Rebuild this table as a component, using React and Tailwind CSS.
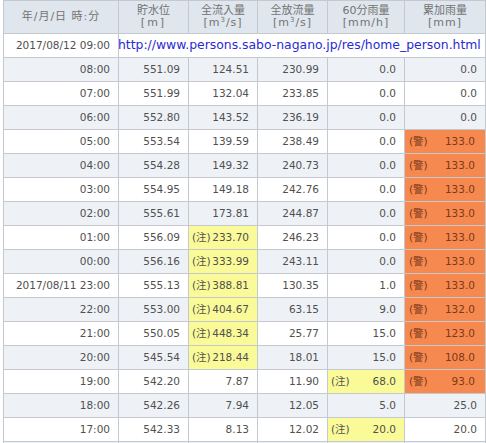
import React from "react";

const rows = [
  ["08:00", "551.09", "124.51", "230.99", "0.0", "0.0"],
  ["07:00", "551.99", "132.04", "233.85", "0.0", "0.0"],
  ["06:00", "552.80", "143.52", "236.19", "0.0", "0.0"],
  ["05:00", "553.54", "139.59", "238.49", "0.0", "!133.0"],
  ["04:00", "554.28", "149.32", "240.73", "0.0", "!133.0"],
  ["03:00", "554.95", "149.18", "242.76", "0.0", "!133.0"],
  ["02:00", "555.61", "173.81", "244.87", "0.0", "!133.0"],
  ["01:00", "556.09", "*233.70", "246.23", "0.0", "!133.0"],
  ["00:00", "556.16", "*333.99", "243.11", "0.0", "!133.0"],
  ["2017/08/11 23:00", "555.13", "*388.81", "130.35", "1.0", "!133.0"],
  ["22:00", "553.00", "*404.67", "63.15", "9.0", "!132.0"],
  ["21:00", "550.05", "*448.34", "25.77", "15.0", "!123.0"],
  ["20:00", "545.54", "*218.44", "18.01", "15.0", "!108.0"],
  ["19:00", "542.20", "7.87", "11.90", "*68.0", "!93.0"],
  ["18:00", "542.26", "7.94", "12.05", "5.0", "25.0"],
  ["17:00", "542.33", "8.13", "12.02", "*20.0", "20.0"],
];

const font = { fontFamily: '"DejaVu Sans", "Noto Sans CJK JP", sans-serif' };

function Cell({ v, bg }) {
  if (v.startsWith("*")) {
    return (
      <td className="border border-[#c4c8cf] bg-[#fafa98] px-[3px] pr-[8px]">
        <div className="flex justify-between items-center">
          <span className="text-[10.5px]">(注)</span>
          <span>{v.slice(1)}</span>
        </div>
      </td>
    );
  }
  if (v.startsWith("!")) {
    return (
      <td className="border border-[#c4c8cf] bg-[#f6894f] text-[#7a3a18] px-[4px] pr-[10px]">
        <div className="flex justify-between items-center">
          <span className="text-[10.5px]">(警)</span>
          <span>{v.slice(1)}</span>
        </div>
      </td>
    );
  }
  return <td className={`border border-[#c4c8cf] text-right pr-[8px] ${bg}`}>{v}</td>;
}

function Sup() {
  return <span className="relative top-[-4px] text-[7px] leading-none">3</span>;
}

export default function App() {
  return (
    <div className="bg-white w-[486px] h-[443px] overflow-hidden pl-[3px]" style={font}>
      <table className="table-fixed border-collapse w-[482px] text-[10.5px] text-[#505050]">
        <colgroup>
          <col className="w-[115px]" />
          <col className="w-[70px]" />
          <col className="w-[69px]" />
          <col className="w-[70px]" />
          <col className="w-[77px]" />
          <col className="w-[81px]" />
        </colgroup>
        <thead>
          <tr className="h-[33px] bg-[#dfe6ee] text-[#737373] text-[11px] leading-[12px]">
            <th className="border border-[#c4c8cf] font-normal tracking-[1px]">年/月/日 時:分</th>
            <th className="border border-[#c4c8cf] font-normal">
              <div>貯水位</div>
              <div className="tracking-[2px]">[m]</div>
            </th>
            <th className="border border-[#c4c8cf] font-normal">
              <div>全流入量</div>
              <div className="tracking-[1px]">[m<Sup />/s]</div>
            </th>
            <th className="border border-[#c4c8cf] font-normal">
              <div>全放流量</div>
              <div className="tracking-[1px]">[m<Sup />/s]</div>
            </th>
            <th className="border border-[#c4c8cf] font-normal">
              <div>60分雨量</div>
              <div className="tracking-[1px]">[mm/h]</div>
            </th>
            <th className="border border-[#c4c8cf] font-normal">
              <div>累加雨量</div>
              <div className="tracking-[1px]">[mm]</div>
            </th>
          </tr>
        </thead>
        <tbody>
          <tr className="h-[24px] bg-white">
            <td className="border border-[#c4c8cf] text-right pr-[8px]">2017/08/12 09:00</td>
            <td colSpan={5} className="border border-[#c4c8cf] p-0 overflow-visible whitespace-nowrap">
              <span className="text-[12.4px] text-[#2a2ad4] ml-[-1px]">http://www.persons.sabo-nagano.jp/res/home_person.html</span>
            </td>
          </tr>
          {rows.map((r, i) => {
            const bg = i % 2 === 0 ? "bg-[#eef2f7]" : "bg-white";
            return (
              <tr key={i} className={`h-[24px] ${bg}`}>
                {r.map((v, j) => (
                  <Cell key={j} v={v} bg={bg} />
                ))}
              </tr>
            );
          })}
          <tr className="h-[24px] bg-[#eef2f7]">
            {[0, 1, 2, 3, 4, 5].map((j) => (
              <td key={j} className="border border-[#c4c8cf]"></td>
            ))}
          </tr>
        </tbody>
      </table>
    </div>
  );
}
